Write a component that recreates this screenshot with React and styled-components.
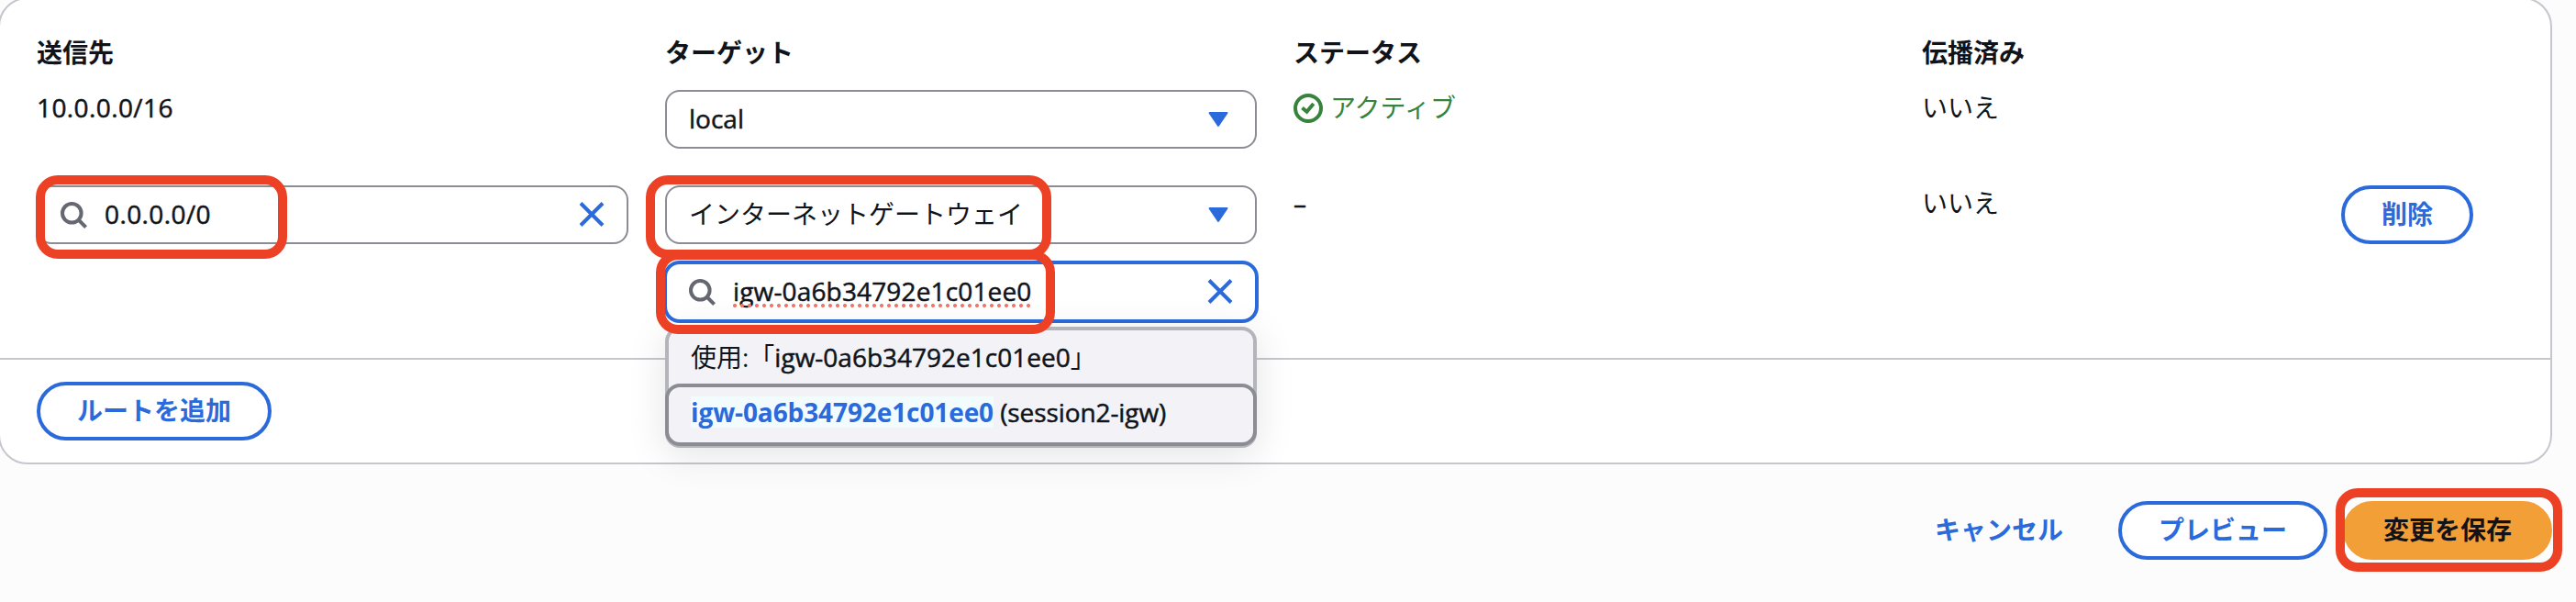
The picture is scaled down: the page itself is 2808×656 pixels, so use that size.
import React from "react";
import styled, { createGlobalStyle } from "styled-components";

const BLUE = "#2b6adb";
const INK = "#10141a";
const LINE = "#c6c6cd";
const MARK = "#ec4125";

const GlobalStyle = createGlobalStyle`
  * { box-sizing: border-box; }
  html, body { margin: 0; height: 100%; overflow: hidden; background: #fcfcfd; }
  body {
    font-family: "Open Sans", "Noto Sans CJK JP", sans-serif;
    font-size: 28px;
    line-height: 40px;
    color: ${INK};
  }
`;

const Page = styled.main`
  width: 2808px;
  height: 656px;
  overflow: hidden;
`;

const Card = styled.section`
  width: 2784px;
  height: 509px;
  margin: -3px 0 0 -2px;
  border: 2px solid ${LINE};
  border-radius: 32px;
  background: #fff;
`;

const Routes = styled.div`
  display: flex;
  flex-direction: column;
  height: 391px;
  padding: 38px 40px 0;
`;

const Row = styled.div`
  display: grid;
  grid-template-columns: 645px 645px 645px 417px 144px;
  column-gap: 40px;
  align-items: start;
  height: ${(p) => p.$height}px;
`;

const Heading = styled.div`
  font-weight: 700;
  line-height: 40px;
`;

const Cell = styled.div`
  position: relative;
  white-space: nowrap;
`;

const Latin = styled.span`
  -webkit-text-stroke: 0.5px currentColor;
  letter-spacing: ${(p) => p.$spacing || 0}px;
`;

const TextCell = styled(Cell)`
  line-height: 38px;
`;

const Stack = styled.div`
  position: relative;
  display: flex;
  flex-direction: column;
  gap: 20px;
`;

const Field = styled.div`
  position: relative;
  display: flex;
  align-items: center;
  height: 64px;
  padding: 0 ${(p) => (p.$search ? 22 : 24)}px;
  border: 2px solid ${(p) => (p.$focus ? BLUE : "#8c8c94")};
  border-radius: 16px;
  background: #fff;
  box-shadow: ${(p) => (p.$focus ? `0 0 0 2px ${BLUE}` : "none")};
  white-space: nowrap;
`;

const FieldText = styled.span`
  flex: 1;
  padding-bottom: 2px;
  margin-left: ${(p) => p.$indent || 0}px;
`;

const Misspelt = styled(Latin)`
  position: relative;
  display: inline-block;
  &::after {
    content: "";
    position: absolute;
    left: 0;
    right: 0;
    bottom: 2px;
    height: 4px;
    background: radial-gradient(circle at 2px 2px, #f07a6f 1.8px, transparent 2.3px) 0 0 / 8px 4px repeat-x;
  }
`;

const Mark = styled.div`
  position: absolute;
  z-index: 5;
  left: ${(p) => p.$x}px;
  top: ${(p) => p.$y}px;
  width: ${(p) => p.$w}px;
  height: 91px;
  border: 10px solid ${MARK};
  border-radius: 24px;
  pointer-events: none;
`;

const Menu = styled.div`
  position: absolute;
  z-index: 3;
  top: 154px;
  left: 0;
  width: 645px;
  height: 132px;
  border: 4px solid #b4b4bb;
  border-radius: 16px;
  background: #f3f3f7;
  box-shadow: 0 8px 40px 2px rgba(0, 7, 22, 0.1);
`;

const Option = styled.div`
  display: flex;
  align-items: center;
  height: 60px;
  padding: 0 0 2px 24px;
  white-space: nowrap;
`;

const ActiveOption = styled(Option)`
  height: 68px;
  margin: -2px -4px 0;
  padding-bottom: 6px;
  border: 4px solid #8c8c94;
  border-radius: 16px;
  white-space: pre;
`;

const Match = styled.span`
  height: 34px;
  line-height: 34px;
  font-weight: 700;
  letter-spacing: -0.1px;
  color: ${BLUE};
  background: #f2fcff;
`;

const Status = styled.div`
  display: flex;
  align-items: center;
  gap: 8px;
  height: 40px;
  line-height: 38px;
  color: #37833b;
`;

const StatusLabel = styled.span`
  padding-bottom: 2px;
`;

const Button = styled.button`
  height: 64px;
  padding: 0 ${(p) => (p.$variant === "link" ? 0 : 40)}px 2px;
  border: ${(p) => (p.$variant === "link" ? 0 : 4)}px solid ${(p) => (p.$variant === "primary" ? "#f29f38" : BLUE)};
  border-radius: 40px;
  background: ${(p) => ({ primary: "#f29f38", link: "transparent" })[p.$variant] || "#fff"};
  color: ${(p) => (p.$variant === "primary" ? INK : BLUE)};
  font: inherit;
  font-weight: 700;
  line-height: 40px;
  white-space: nowrap;
`;

const CardFooter = styled.div`
  padding: 24px 40px;
  border-top: 2px solid ${LINE};
`;

const Actions = styled.footer`
  display: flex;
  justify-content: flex-end;
  padding: 40px 26px 0 0;
`;

const Spaced = styled.div`
  position: relative;
  margin-left: ${(p) => p.$gap}px;
`;

const SearchIcon = () => (
  <svg width="32" height="32" viewBox="0 0 32 32" fill="none" stroke="#656871" strokeWidth="4">
    <circle cx="14.3" cy="14.3" r="10.3" />
    <path d="M21 21l8.6 8.6" />
  </svg>
);

const CloseIcon = () => (
  <svg width="32" height="32" viewBox="0 0 32 32" fill="none" stroke={BLUE} strokeWidth="4">
    <path d="M4 3.5l24 24M28 3.5l-24 24" />
  </svg>
);

const Caret = () => (
  <svg width="32" height="32" viewBox="0 0 32 32" fill={BLUE} stroke={BLUE} strokeWidth="2" strokeLinejoin="round">
    <path d="M6.5 9h19L16 23z" />
  </svg>
);

const CheckIcon = () => (
  <svg width="32" height="32" viewBox="0 0 32 32" fill="none" stroke="currentColor" strokeWidth="4">
    <circle cx="16" cy="16" r="14" />
    <path d="M9.5 15.5l5 4.2L21.8 11" />
  </svg>
);

export default function App() {
  return (
    <Page>
      <GlobalStyle />
      <Card>
        <Routes>
          <Row $height={61}>
            <Heading>送信先</Heading>
            <Heading>ターゲット</Heading>
            <Heading>ステータス</Heading>
            <Heading>伝播済み</Heading>
          </Row>
          <Row $height={104}>
            <TextCell>
              <Latin $spacing={0.4}>10.0.0.0/16</Latin>
            </TextCell>
            <Field>
              <FieldText>
                <Latin>local</Latin>
              </FieldText>
              <Caret />
            </Field>
            <Status>
              <CheckIcon />
              <StatusLabel>アクティブ</StatusLabel>
            </Status>
            <TextCell>いいえ</TextCell>
          </Row>
          <Row $height={188}>
            <Cell>
              <Field $search>
                <SearchIcon />
                <FieldText $indent={18}>
                  <Latin $spacing={0.4}>0.0.0.0/0</Latin>
                </FieldText>
                <CloseIcon />
              </Field>
              <Mark $x={-1} $y={-11} $w={273.5} />
            </Cell>
            <Stack>
              <Field>
                <FieldText>インターネットゲートウェイ</FieldText>
                <Caret />
              </Field>
              <Field $search $focus>
                <SearchIcon />
                <FieldText $indent={18}>
                  <Misspelt $spacing={0.15}>igw-0a6b34792e1c01ee0</Misspelt>
                </FieldText>
                <CloseIcon />
              </Field>
              <Menu>
                <Option>
                  使用:「<Latin>igw-0a6b34792e1c01ee0</Latin>」
                </Option>
                <ActiveOption>
                  <Match>igw-0a6b34792e1c01ee0</Match>
                  <Latin $spacing={-0.1}> (session2-igw)</Latin>
                </ActiveOption>
              </Menu>
              <Mark $x={-21} $y={-11} $w={442} />
              <Mark $x={-10.5} $y={71} $w={435.5} />
            </Stack>
            <TextCell>
              <Latin>–</Latin>
            </TextCell>
            <TextCell>いいえ</TextCell>
            <Button>削除</Button>
          </Row>
        </Routes>
        <CardFooter>
          <Button>ルートを追加</Button>
        </CardFooter>
      </Card>
      <Actions>
        <Button $variant="link">キャンセル</Button>
        <Spaced $gap={60}>
          <Button>プレビュー</Button>
        </Spaced>
        <Spaced $gap={17}>
          <Button $variant="primary">変更を保存</Button>
          <Mark $x={-8} $y={-14} $w={247} />
        </Spaced>
      </Actions>
    </Page>
  );
}
